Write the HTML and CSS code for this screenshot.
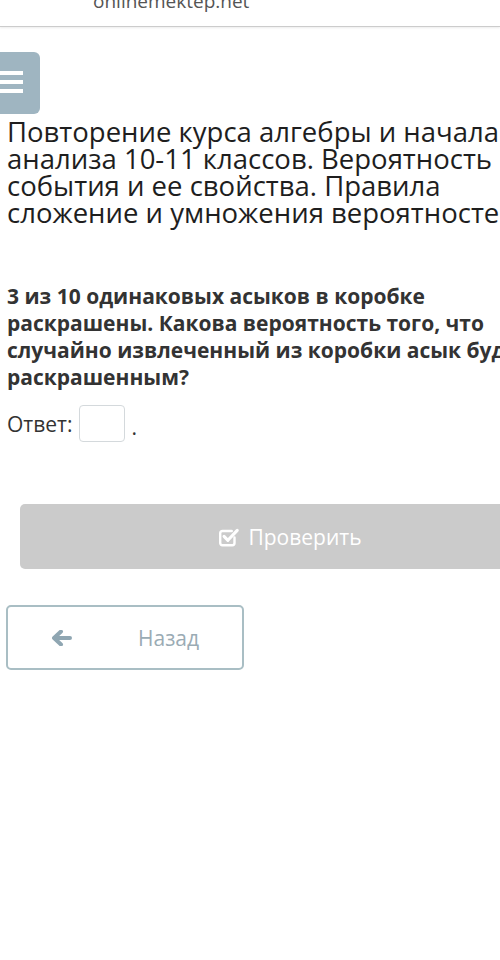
FILE: index.html
```html
<!DOCTYPE html>
<html lang="ru">
<head>
    <meta charset="UTF-8">
    <meta name="viewport" content="width=device-width, initial-scale=1.0">
    <title>onlinemektep.net</title>
    <link rel="stylesheet" href="styles.css">
</head>
<body>
    <header class="topbar">
        <span class="site">onlinemektep.net</span>
    </header>

    <div class="page">
        <button class="menu-btn" type="button" aria-label="Меню">
            <span></span><span></span><span></span>
        </button>

        <h1 class="lesson-title">Повторение курса алгебры и начала<br>анализа 10-11 классов. Вероятность<br>события и ее свойства. Правила<br>сложение и умножения вероятностей</h1>

        <div class="task">
            <p class="question">3 из 10 одинаковых асыков в коробке<br>раскрашены. Какова вероятность того, что<br>случайно извлеченный из коробки асык будет<br>раскрашенным?</p>
            <div class="answer">
                <label for="answer">Ответ:</label>
                <input type="text" id="answer">
                <span class="dot">.</span>
            </div>
        </div>

        <button class="check-btn" type="button" disabled>
            <svg class="icon" viewBox="0 0 20 20" width="22" height="22">
                <path d="M15 10.5v5a2 2 0 0 1-2 2H4a2 2 0 0 1-2-2V6.5a2 2 0 0 1 2-2h8.5" fill="none" stroke="#fff" stroke-width="2.2" stroke-linecap="round"/>
                <path d="M5.5 9.5l3.5 3.5 8.5-9" fill="none" stroke="#fff" stroke-width="2.8" stroke-linecap="round" stroke-linejoin="round"/>
            </svg>
            Проверить
        </button>

        <button class="back-btn" type="button">
            <svg class="icon" viewBox="0 0 20 16" width="20" height="16">
                <path d="M9 1.5L2 8l7 6.5M3 8h15" fill="none" stroke="#8fa6b2" stroke-width="4" stroke-linecap="round" stroke-linejoin="round"/>
            </svg>
            <span>Назад</span>
        </button>
    </div>
</body>
</html>
```

FILE: styles.css
```css
html, body {
    margin: 0;
    padding: 0;
    overflow: hidden;
}
body {
    width: 500px;
    background: #fff;
    font-family: "Open Sans", Arial, sans-serif;
    color: #222;
}
.topbar {
    height: 26px;
    border-bottom: 1px solid #ccc;
    box-shadow: 0 1px 2px rgba(0,0,0,0.08);
    overflow: hidden;
}
.site {
    display: block;
    padding-left: 93px;
    margin-top: -12px;
    font-size: 19px;
    line-height: 26px;
    color: #555;
}
.page {
    width: 560px;
    padding: 25px 0 0 0;
}
.menu-btn {
    display: flex;
    flex-direction: column;
    align-items: flex-end;
    gap: 5px;
    width: 60px;
    height: 62px;
    margin-left: -20px;
    padding: 19px 17px 0 0;
    border: 0;
    border-radius: 6px;
    background: #9fb5c1;
}
.menu-btn span {
    display: block;
    width: 40px;
    height: 4px;
    background: #fff;
}
.lesson-title {
    margin: 4px 0 0 7px;
    font-size: 27.5px;
    font-weight: 400;
    line-height: 27px;
    white-space: nowrap;
    color: #1e1e1e;
}
.task {
    padding: 0 0 0 7px;
    margin-top: 57px;
}
.question {
    margin: 0;
    font-size: 21px;
    font-weight: 700;
    line-height: 27px;
    white-space: nowrap;
    color: #333;
}
.answer {
    display: flex;
    align-items: center;
    gap: 6px;
    margin-top: 14px;
    font-size: 21px;
    color: #333;
}
.answer input {
    width: 46px;
    height: 37px;
    box-sizing: border-box;
    border: 1px solid #d4d9dc;
    border-radius: 4px;
    margin-left: 1px;
}
.dot {
    padding-top: 6px;
}
.check-btn {
    display: flex;
    align-items: center;
    justify-content: center;
    gap: 8px;
    width: 540px;
    height: 65px;
    margin: 62px 0 0 20px;
    border: 0;
    border-radius: 5px;
    background: #cbcbcb;
    color: #fff;
    font-family: inherit;
    font-size: 21px;
}
.back-btn {
    display: flex;
    align-items: center;
    width: 238px;
    height: 65px;
    margin: 36px 0 0 6px;
    padding: 0 0 0 44px;
    box-sizing: border-box;
    border: 2px solid #a9bec4;
    border-radius: 5px;
    background: #fff;
    font-family: inherit;
    font-size: 21px;
    color: #9aabb4;
}
.back-btn span {
    margin-left: 66px;
}
```
